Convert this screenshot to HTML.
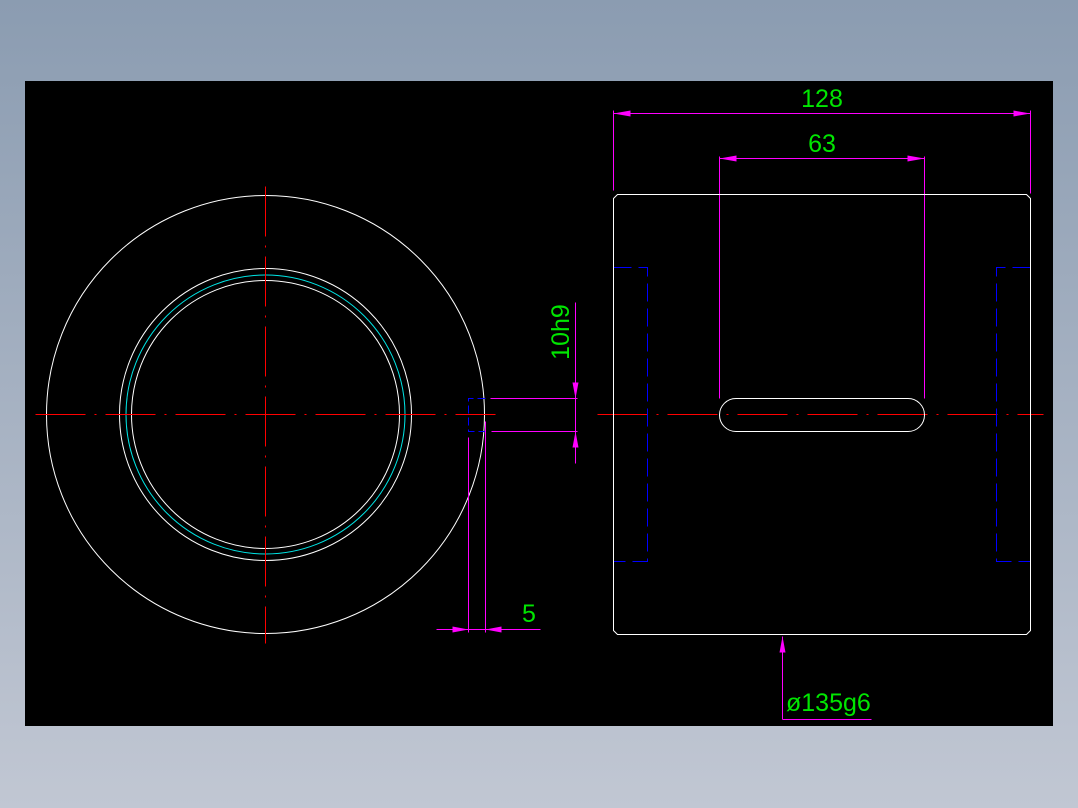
<!DOCTYPE html>
<html><head><meta charset="utf-8"><style>
html,body{margin:0;padding:0;}
body{width:1078px;height:808px;background:linear-gradient(#8b9cb1,#c1c7d3);position:relative;overflow:hidden;}
svg{position:absolute;left:0;top:0;}
text{font-family:"Liberation Sans",sans-serif;fill:#00e600;font-size:25px;}
</style></head><body>
<svg width="1078" height="808" viewBox="0 0 1078 808">
<rect x="25" y="81" width="1028" height="645" fill="#000"/>
<g transform="translate(0.5,0.5)">
<g fill="none" stroke-width="1">
<g stroke="#fff">
<circle cx="265" cy="414" r="219"/>
<circle cx="265" cy="414" r="146"/>
<circle cx="265" cy="414" r="134"/>
</g>
<circle cx="265" cy="414" r="139.5" stroke="#00e5e5"/>
<line x1="35" y1="414" x2="495" y2="414" stroke="#f00" stroke-dasharray="50 9 2 9"/>
<line x1="265" y1="186" x2="265" y2="643" stroke="#f00" stroke-dasharray="50 9 2 9"/>
<line x1="597" y1="414" x2="1043" y2="414" stroke="#f00" stroke-dasharray="50 9 2 9"/>
<path d="M485 398H468V431H485" stroke="#0000ff" stroke-dasharray="8 4"/>
<path d="M613 267H647V561H613" stroke="#0000ff" stroke-dasharray="18 7"/>
<path d="M1030 267H996V561H1030" stroke="#0000ff" stroke-dasharray="18 7"/>
<g stroke="#ff00ff">
<line x1="613" y1="110" x2="613" y2="190"/>
<line x1="1030" y1="110" x2="1030" y2="193"/>
<line x1="613" y1="113" x2="1030" y2="113"/>
<line x1="719" y1="156" x2="719" y2="398"/>
<line x1="924" y1="156" x2="924" y2="398"/>
<line x1="719" y1="158" x2="924" y2="158"/>
<line x1="490" y1="398" x2="577" y2="398"/>
<line x1="491" y1="431" x2="577" y2="431"/>
<line x1="575" y1="302" x2="575" y2="463"/>
<line x1="468" y1="437" x2="468" y2="632"/>
<line x1="485" y1="421" x2="485" y2="632"/>
<line x1="436" y1="629" x2="540" y2="629"/>
<line x1="782" y1="636" x2="782" y2="719"/>
<line x1="782" y1="719" x2="871" y2="719"/>
</g>
<path d="M617 194H1026L1030 198V630L1026 634H617L613 630V198Z" stroke="#fff"/>
<rect x="719" y="398" width="205" height="33" rx="16.5" stroke="#fff"/>
</g>
<g fill="#ff00ff">
<polygon points="613,113 630,110 630,116"/>
<polygon points="1030,113 1013,110 1013,116"/>
<polygon points="719,158 736,155 736,161"/>
<polygon points="924,158 907,155 907,161"/>
<polygon points="575,398 572,382 578,382"/>
<polygon points="575,431 572,447 578,447"/>
<polygon points="468,629 452,626 452,632"/>
<polygon points="485,629 501,626 501,632"/>
<polygon points="782,636 779,652 785,652"/>
</g>
</g>
<text x="822" y="107" text-anchor="middle">128</text>
<text x="822" y="152" text-anchor="middle">63</text>
<text x="529" y="622" text-anchor="middle">5</text>
<text x="786" y="711">ø135g6</text>
<text transform="translate(569,332) rotate(-90)" text-anchor="middle">10h9</text>
</svg>
</body></html>
